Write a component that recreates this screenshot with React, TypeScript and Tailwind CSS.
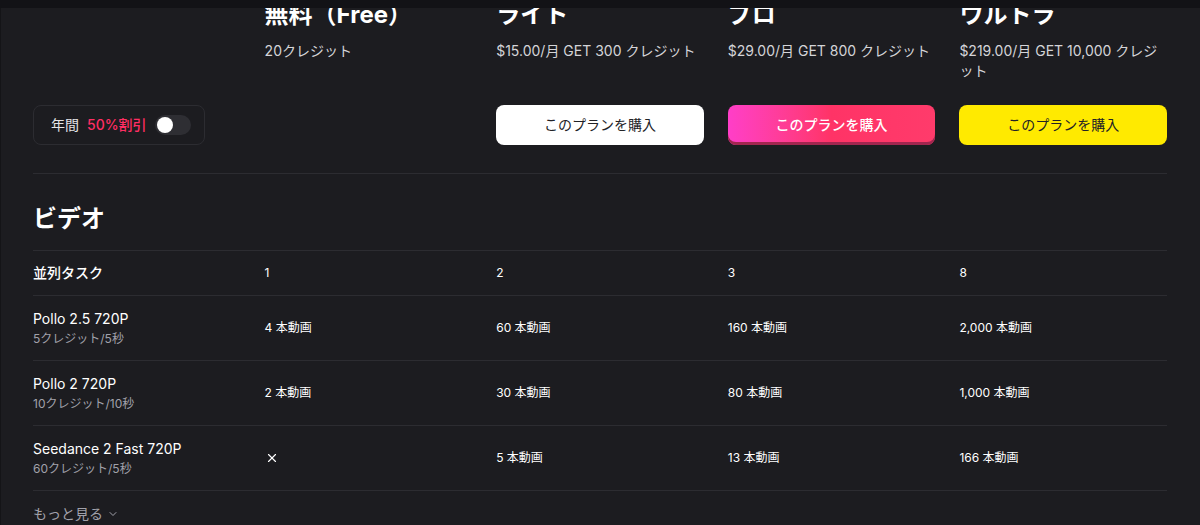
import React, { useState } from 'react';
import { ChevronDown, X } from 'lucide-react';

const font = { fontFamily: 'Inter, "Noto Sans CJK JP", sans-serif' };

const plans = [
    { name: '無料（Free）', sub: '20クレジット', btn: null },
    { name: 'ライト', sub: '$15.00/月 GET 300 クレジット', btn: 'white' },
    { name: 'プロ', sub: '$29.00/月 GET 800 クレジット', btn: 'pink' },
    { name: 'ウルトラ', sub: '$219.00/月 GET 10,000 クレジット', btn: 'yellow' },
];

const rows = [
    { name: 'Pollo 2.5 720P', cost: '5クレジット/5秒', vals: ['4 本動画', '60 本動画', '160 本動画', '2,000 本動画'] },
    { name: 'Pollo 2 720P', cost: '10クレジット/10秒', vals: ['2 本動画', '30 本動画', '80 本動画', '1,000 本動画'] },
    { name: 'Seedance 2 Fast 720P', cost: '60クレジット/5秒', vals: [null, '5 本動画', '13 本動画', '166 本動画'] },
];

const BuyButton = ({ kind }: { kind: string }) => {
    if (kind === 'white') {
        return <button className="h-10 w-full rounded-lg bg-white text-sm text-[#222226]">このプランを購入</button>;
    }
    if (kind === 'pink') {
        return (
            <button className="h-10 w-full rounded-lg bg-gradient-to-r from-[#ff3ec8] via-[#ff3366] to-[#ff3b6b] text-sm font-medium text-white shadow-[inset_0_-3px_0_#a2264f]">
                このプランを購入
            </button>
        );
    }
    return <button className="h-10 w-full rounded-lg bg-[#ffea00] text-sm text-[#222226]">このプランを購入</button>;
};

export default function App() {
    const [yearly, setYearly] = useState(false);

    return (
        <div style={font} className="relative h-[525px] w-[1200px] overflow-hidden bg-[#1c1c20] text-white">
            <div className="absolute left-0 top-0 z-10 h-2 w-full bg-[#121216]" />
            <div className="absolute left-0 top-0 h-full w-px bg-[#141417]" />

            <div className="px-[33px] pr-[33px]">
                <div className="-mt-[1px] grid grid-cols-5 gap-6">
                    <div />
                    {plans.map(p => (
                        <div key={p.name}>
                            <h3 className="text-2xl font-bold leading-8">{p.name}</h3>
                            <p className="mt-[10px] h-[41px] text-sm leading-[20px] text-[#d4d4d8]">{p.sub}</p>
                        </div>
                    ))}
                </div>

                <div className="mt-[23px] grid grid-cols-5 gap-6 border-b border-[#2c2c31] pb-7">
                    <div className="flex h-10 w-[172px] items-center gap-2 rounded-lg border border-[#2c2c31] pl-[17px]">
                        <span className="text-sm text-[#e4e4e7]">年間</span>
                        <span className="text-sm font-medium text-[#ff2e63]">50%割引</span>
                        <button
                            onClick={() => setYearly(!yearly)}
                            className="flex h-5 w-9 items-center rounded-full bg-[#2e2e33] px-[2px]"
                        >
                            <span className={`h-4 w-4 rounded-full bg-white ${yearly ? 'translate-x-4' : ''}`} />
                        </button>
                    </div>
                    <div />
                    {plans.slice(1).map(p => (
                        <BuyButton key={p.name} kind={p.btn as string} />
                    ))}
                </div>

                <h2 className="pb-[20px] pt-[34px] text-2xl font-bold leading-[22px]">ビデオ</h2>

                <div className="border-t border-[#2c2c31]">
                    <div className="grid h-[45px] grid-cols-5 items-center gap-6 border-b border-[#2c2c31] text-xs">
                        <span className="text-sm font-medium">並列タスク</span>
                        <span>1</span>
                        <span>2</span>
                        <span>3</span>
                        <span>8</span>
                    </div>
                    {rows.map(r => (
                        <div key={r.name} className="grid h-[65px] grid-cols-5 items-center gap-6 border-b border-[#2c2c31]">
                            <div>
                                <p className="text-sm leading-5">{r.name}</p>
                                <p className="mt-[2px] text-xs leading-4 text-[#a1a1aa]">{r.cost}</p>
                            </div>
                            {r.vals.map((v, i) =>
                                v ? (
                                    <span key={i} className="text-xs">{v}</span>
                                ) : (
                                    <X key={i} size={14} strokeWidth={2} className="text-white" />
                                )
                            )}
                        </div>
                    ))}
                </div>

                <button className="mt-[13px] flex items-center gap-1 text-sm text-[#a1a1aa]">
                    もっと見る <ChevronDown size={12} />
                </button>
            </div>
        </div>
    );
}
